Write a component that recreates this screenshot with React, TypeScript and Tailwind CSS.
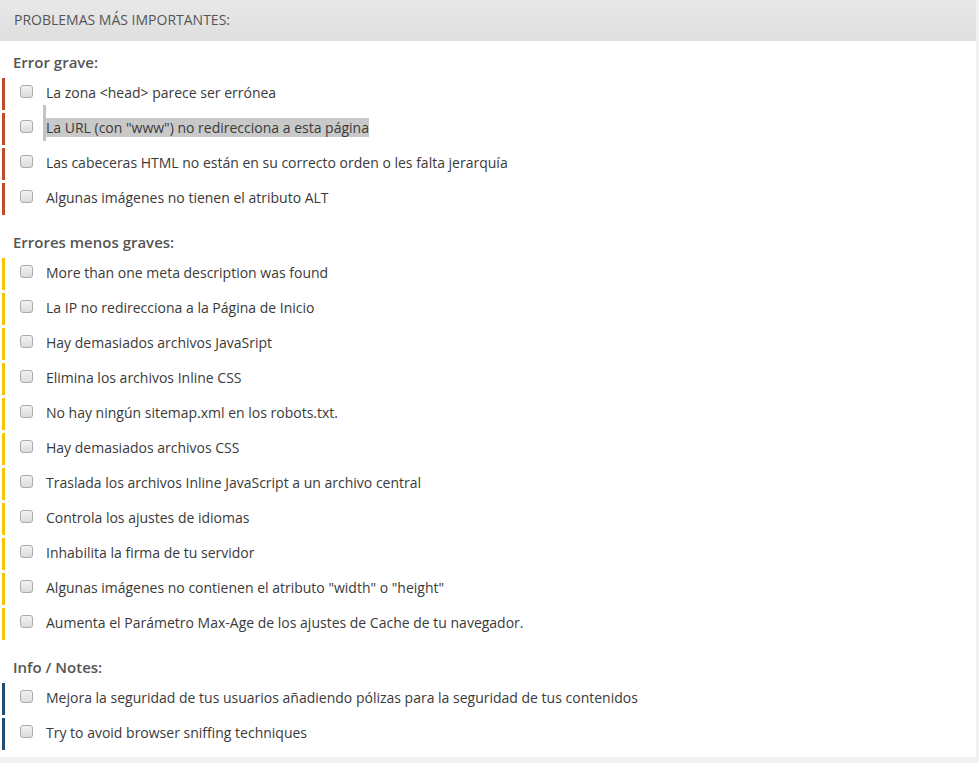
import React from "react";

type Item = { text: string; highlight?: boolean };
type Section = { title: string; color: string; items: Item[] };

const sections: Section[] = [
  {
    title: "Error grave:",
    color: "red",
    items: [
      { text: "La zona <head> parece ser errónea" },
      { text: 'La URL (con "www") no redirecciona a esta página', highlight: true },
      { text: "Las cabeceras HTML no están en su correcto orden o les falta jerarquía" },
      { text: "Algunas imágenes no tienen el atributo ALT" },
    ],
  },
  {
    title: "Errores menos graves:",
    color: "yellow",
    items: [
      { text: "More than one meta description was found" },
      { text: "La IP no redirecciona a la Página de Inicio" },
      { text: "Hay demasiados archivos JavaSript" },
      { text: "Elimina los archivos Inline CSS" },
      { text: "No hay ningún sitemap.xml en los robots.txt." },
      { text: "Hay demasiados archivos CSS" },
      { text: "Traslada los archivos Inline JavaScript a un archivo central" },
      { text: "Controla los ajustes de idiomas" },
      { text: "Inhabilita la firma de tu servidor" },
      { text: 'Algunas imágenes no contienen el atributo "width" o "height"' },
      { text: "Aumenta el Parámetro Max-Age de los ajustes de Cache de tu navegador." },
    ],
  },
  {
    title: "Info / Notes:",
    color: "blue",
    items: [
      { text: "Mejora la seguridad de tus usuarios añadiendo pólizas para la seguridad de tus contenidos" },
      { text: "Try to avoid browser sniffing techniques" },
    ],
  },
];

function Checkbox() {
  return (
    <div className="w-[13px] h-[13px] rounded-[3px] border border-[#ababab] bg-gradient-to-b from-[#f2f2f2] to-[#dcdcdc] shrink-0 mt-[-6px]" />
  );
}

function Row({ item, color }: { item: Item; color: string }) {
  const border =
    color === "red"
      ? "border-[#c24b27]"
      : color === "yellow"
      ? "border-[#f6c500]"
      : "border-[#1f4e70]";
  return (
    <div className={`relative ml-[2px] h-[32px] border-l-[3px] ${border} flex items-center pl-[15px]`}>
      <Checkbox />
      <div className="relative ml-[13px] mt-[-4px]">
        {item.highlight && (
          <div className="absolute left-[-3px] top-[-10px] w-[3px] h-[36px] bg-[#c4c4c4]" />
        )}
        <span
          className={`text-[14px] leading-[19px] text-[#3a3a3a] ${
            item.highlight ? "bg-[#c9c9c9]" : ""
          }`}
        >
          {item.text}
        </span>
      </div>
    </div>
  );
}

export default function App() {
  return (
    <div
      className="min-h-[763px] w-[979px] bg-[#f2f2f2]"
      style={{ fontFamily: '"Open Sans", "Noto Sans", sans-serif' }}
    >
      <div className="w-[976px] bg-white pb-[7px]">
        <div className="h-[41px] bg-gradient-to-b from-[#e9e9e9] to-[#dedede] flex items-center pl-[14px]">
          <span className="text-[14px] text-[#555] uppercase mt-[-3px]">
            Problemas más importantes:
          </span>
        </div>
        <div className="pt-[11px]">
          {sections.map((s, i) => (
            <div key={s.title} className={i > 0 ? "mt-[17px]" : ""}>
              <div className="pl-[13px] h-[20px] leading-[20px] text-[15px] font-semibold text-[#555] mb-[6px]">
                {s.title}
              </div>
              <div className="flex flex-col gap-[3px]">
                {s.items.map((it) => (
                  <Row key={it.text} item={it} color={s.color} />
                ))}
              </div>
            </div>
          ))}
        </div>
      </div>
    </div>
  );
}
